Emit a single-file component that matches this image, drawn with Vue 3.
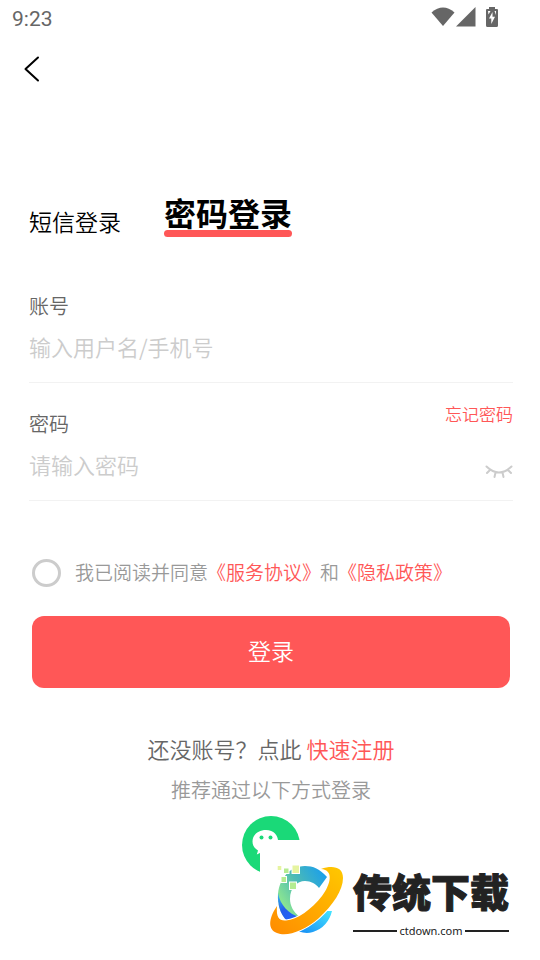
<script setup>
import { ref } from 'vue'

const account = ref('')
const password = ref('')
const showPassword = ref(false)
const agreed = ref(false)
const mode = ref('password')
</script>

<template>
  <div class="page">
    <header class="status">
      <span class="clock">9:23</span>
      <div class="indicators">
        <svg class="wifi" viewBox="0 0 24 20" aria-hidden="true"><path d="M0.500 5.500Q12-4.500 23.500 5.500L12 19Z" /></svg>
        <svg class="signal" viewBox="0 0 20 20" aria-hidden="true"><path d="M19.500 0V19.500H0Z" /></svg>
        <svg class="battery" viewBox="0 0 12 20" aria-hidden="true">
          <path d="M3 0h6v2h2q1 0 1 1v15.500q0 1.500-1.500 1.500h-9Q0 20 0 18.500V3q0-1 1-1h2Z" />
          <path class="bolt" d="M6.500 5L3 11.500h2.300V17L9 9.800H6.500ZM2 4h2.500L2.500 7.500ZM8.500 4H10v4Z" />
        </svg>
      </div>
    </header>

    <nav class="nav">
      <button class="back" type="button" aria-label="返回">
        <svg viewBox="0 0 16 26" aria-hidden="true"><path d="M14 1.500L1.500 13L14 24.500" /></svg>
      </button>
    </nav>

    <main>
      <div class="tabs">
        <button class="tab" type="button" @click="mode = 'sms'">短信登录</button>
        <button class="tab active" type="button" @click="mode = 'password'">密码登录</button>
      </div>

      <form @submit.prevent>
        <div class="field">
          <div class="field-head"><label for="account">账号</label></div>
          <div class="entry">
            <input id="account" v-model="account" type="text" placeholder="输入用户名/手机号">
          </div>
        </div>
        <div class="field">
          <div class="field-head">
            <label for="password">密码</label>
            <a class="forgot" href="#">忘记密码</a>
          </div>
          <div class="entry">
            <input id="password" v-model="password" :type="showPassword ? 'text' : 'password'" placeholder="请输入密码">
            <button class="eye" type="button" aria-label="显示密码" @click="showPassword = !showPassword">
              <svg viewBox="0 0 28 14" aria-hidden="true">
                <path d="M1.500 1.500Q14 13.500 26.500 1.500M5 5L2 8M10.500 7.500L9.500 12M17.500 7.500L18.500 12M23 5L26 8" />
              </svg>
            </button>
          </div>
        </div>

        <div class="agree">
          <input id="agree" v-model="agreed" type="checkbox">
          <p><label for="agree">我已阅读并同意</label><a href="#">《服务协议》</a>和<a href="#">《隐私政策》</a></p>
        </div>

        <button class="submit" type="submit">登录</button>
      </form>

      <p class="register">还没账号？点此<a href="#">快速注册</a></p>
      <p class="hint">推荐通过以下方式登录</p>

      <div class="social">
        <button class="wechat" type="button" aria-label="微信登录">
          <svg viewBox="0 0 58 58" aria-hidden="true">
            <circle cx="29" cy="29" r="29" fill="#1ad978" />
            <path fill="#fff" d="M24 14C16 14 10.500 19 10.500 25.500C10.500 29.500 12.500 32.500 16 34.500L14.800 38.500L20 36Q29 38.500 34 32C39 25 35 14 24 14Z" />
            <circle cx="19.500" cy="21.500" r="2" fill="#1ad978" />
            <circle cx="28.500" cy="21.500" r="2" fill="#1ad978" />
          </svg>
        </button>

        <aside class="brand">
          <svg class="emblem" viewBox="260 856 90 84" aria-hidden="true">
            <defs>
              <linearGradient id="arc" x1="0" y1="0.700" x2="1" y2="0">
                <stop offset="0" stop-color="#98ee8a" />
                <stop offset="0.450" stop-color="#4dbbb4" />
                <stop offset="1" stop-color="#129af5" />
              </linearGradient>
              <linearGradient id="ring" x1="0" y1="1" x2="1" y2="0">
                <stop offset="0" stop-color="#ff8b00" />
                <stop offset="1" stop-color="#ffc800" />
              </linearGradient>
              <linearGradient id="base" x1="0" y1="1" x2="1" y2="0">
                <stop offset="0" stop-color="#168cf4" />
                <stop offset="1" stop-color="#45e5ff" />
              </linearGradient>
              <linearGradient id="deep" x1="0" y1="0" x2="0.500" y2="1">
                <stop offset="0" stop-color="#38b9ef" />
                <stop offset="0.550" stop-color="#245eea" />
                <stop offset="1" stop-color="#2362fa" />
              </linearGradient>
            </defs>
            <path fill="url(#arc)" d="M327 877C320 869 313 866 305 866C289 866 278 880 278 897C278 909 283 918 290 923L300 917C293 912 290 905 290 899C290 888 297 881 305 881C311 881 316 884 319 888Z" />
            <path fill="url(#deep)" d="M278 893C280 905 289 914 299 917L290 923C282 918 277 907 278 893Z" />
            <path fill="url(#base)" d="M332 911L326 911Q314 924 299 931.500Q306 934 313 932Q328 927 332 911Z" />
            <path class="orbit" fill="url(#ring)" d="M321 869C333 865 343 867 343 878C343 890 333 905 319 918C304 931 287 937 277 933C268 930 268 919 277 906C276 917 279 921 286 920.500C297 920 312 909 322 896C331 884 334 870 321 869Z" />
            <g class="bits">
              <path fill="#e6f4a0" d="M277.700 866h3.600v4h-3.600zM292.500 865.500h6.500v7.500h-6.500z" />
              <path fill="#b5ec91" d="M284 868.500h4.500v4.500h-4.500zM281.500 877h4.500v5h-4.500zM290 882.500h6v6.500h-6z" />
            </g>
          </svg>
          <div class="wordmark">
            <strong>传统下载</strong>
            <span class="domain">ctdown.com</span>
          </div>
        </aside>
      </div>
    </main>
  </div>
</template>

<style>
body {
  margin: 0;
  background: #fff;
}
</style>

<style scoped>
.page {
  font-family: "Noto Sans CJK SC", sans-serif;
  font-weight: 350;
  color: #000;
  overflow: hidden;
  padding-bottom: 10px;
}

button {
  padding: 0;
  border: 0;
  background: none;
  font: inherit;
  color: inherit;
  cursor: pointer;
}

svg {
  display: block;
}

p {
  margin: 0;
}

a {
  color: #ff5757;
  text-decoration: none;
}

.status {
  display: flex;
  justify-content: space-between;
  align-items: center;
  height: 38px;
  padding: 0 42px 0 12px;
}

.clock {
  font: 400 21px/38px Roboto, sans-serif;
  color: #666;
}

.indicators {
  display: flex;
  align-items: center;
  height: 34px;
  align-self: flex-start;
  fill: #666;
}

.wifi {
  width: 24px;
  height: 20px;
}

.signal {
  width: 20px;
  height: 20px;
  margin: 0 10px 0 1px;
}

.battery {
  width: 12px;
  height: 20px;
}

.bolt {
  fill: #fff;
}

.nav {
  display: flex;
  align-items: center;
  height: 62px;
  padding: 0 24px;
}

.back svg {
  width: 16px;
  height: 26px;
  fill: none;
  stroke: #000;
  stroke-width: 2;
  stroke-linecap: round;
  stroke-linejoin: round;
}

.tabs {
  display: flex;
  align-items: flex-end;
  gap: 43px;
  padding: 97px 28px 0 29px;
}

.tab {
  font-size: 23px;
  line-height: 32px;
}

.active {
  font-size: 32px;
  font-weight: 700;
  line-height: 30px;
}

.active::after {
  content: "";
  display: block;
  height: 7px;
  margin-top: 3px;
  border-radius: 4px;
  background: #ff5757;
}

.field {
  margin: 27px 27px 0 29px;
  padding-bottom: 19px;
  border-bottom: 1px solid #f2f2f2;
}

.field:first-child {
  margin-top: 55px;
}

.field-head {
  display: flex;
  justify-content: space-between;
  align-items: flex-start;
  height: 28px;
  margin-bottom: 9px;
  font-size: 20px;
  line-height: 28px;
  color: #666;
}

.forgot {
  margin-top: -8px;
  font-size: 17px;
  line-height: 24px;
}

.entry {
  display: flex;
  align-items: flex-end;
}

.entry input {
  flex: 1;
  min-width: 0;
  height: 34px;
  padding: 0;
  border: 0;
  outline: 0;
  background: none;
  font: 350 22px/34px "Noto Sans CJK SC", sans-serif;
  color: #333;
}

.entry input::placeholder {
  color: #ccc;
  opacity: 1;
}

.eye svg {
  width: 28px;
  height: 14px;
  padding-top: 6px;
  margin-bottom: 2px;
  fill: none;
  stroke: #ccc;
  stroke-width: 2;
  stroke-linecap: round;
}

.agree {
  display: flex;
  align-items: center;
  gap: 14px;
  margin: 57px 30px 0 32px;
  font-size: 19px;
  line-height: 28px;
  color: #999;
}

.agree input {
  appearance: none;
  flex: none;
  width: 29px;
  height: 28px;
  margin: 0;
  border: 3px solid #ccc;
  border-radius: 50%;
}

.agree input:checked {
  border-color: #ff5757;
  background: #ff5757;
}

.agree p {
  padding-bottom: 2px;
  white-space: nowrap;
}

.agree a {
  margin: 0 -1px;
}

.submit {
  display: block;
  width: calc(100% - 62px);
  height: 72px;
  margin: 28px 30px 0 32px;
  padding-bottom: 4px;
  border-radius: 12px;
  background: #ff5757;
  color: #fff;
  font-size: 23px;
}

.register {
  margin-top: 45px;
  padding-left: 2px;
  text-align: center;
  font-size: 22px;
  line-height: 30px;
  color: #666;
}

.register a {
  margin-left: 5px;
}

.hint {
  margin-top: 13px;
  padding-left: 2px;
  text-align: center;
  font-size: 20px;
  line-height: 28px;
  color: #999;
}

.social {
  position: relative;
  display: flex;
  justify-content: center;
  margin-top: 12px;
  padding: 0 0 76px 2px;
}

.wechat svg {
  width: 58px;
  height: 58px;
}

/* Brand plate laid over the corner of the login icon */
.brand {
  position: absolute;
  top: 24px;
  left: calc(50% - 10px);
  display: flex;
  align-items: flex-start;
  gap: 3px;
  width: 260px;
  padding: 16px 0 10px;
  background: #fff;
}

.emblem {
  flex: none;
  width: 90px;
  height: 84px;
}

.orbit {
  stroke: #fff;
  stroke-width: 2;
  paint-order: stroke;
}

.bits {
  stroke: #fff;
  stroke-width: 2;
  paint-order: stroke;
}

.wordmark {
  color: #222;
  padding-top: 8px;
}

.wordmark strong {
  display: block;
  font-size: 39px;
  font-weight: 900;
  line-height: 52px;
  -webkit-text-stroke: 1px #222;
}

.domain {
  display: flex;
  align-items: center;
  gap: 2px;
  margin-top: 6px;
  font: 400 11px/18px "Noto Sans", sans-serif;
}

.domain::before,
.domain::after {
  content: "";
  flex: 1;
  height: 2px;
  background: #222;
}
</style>
